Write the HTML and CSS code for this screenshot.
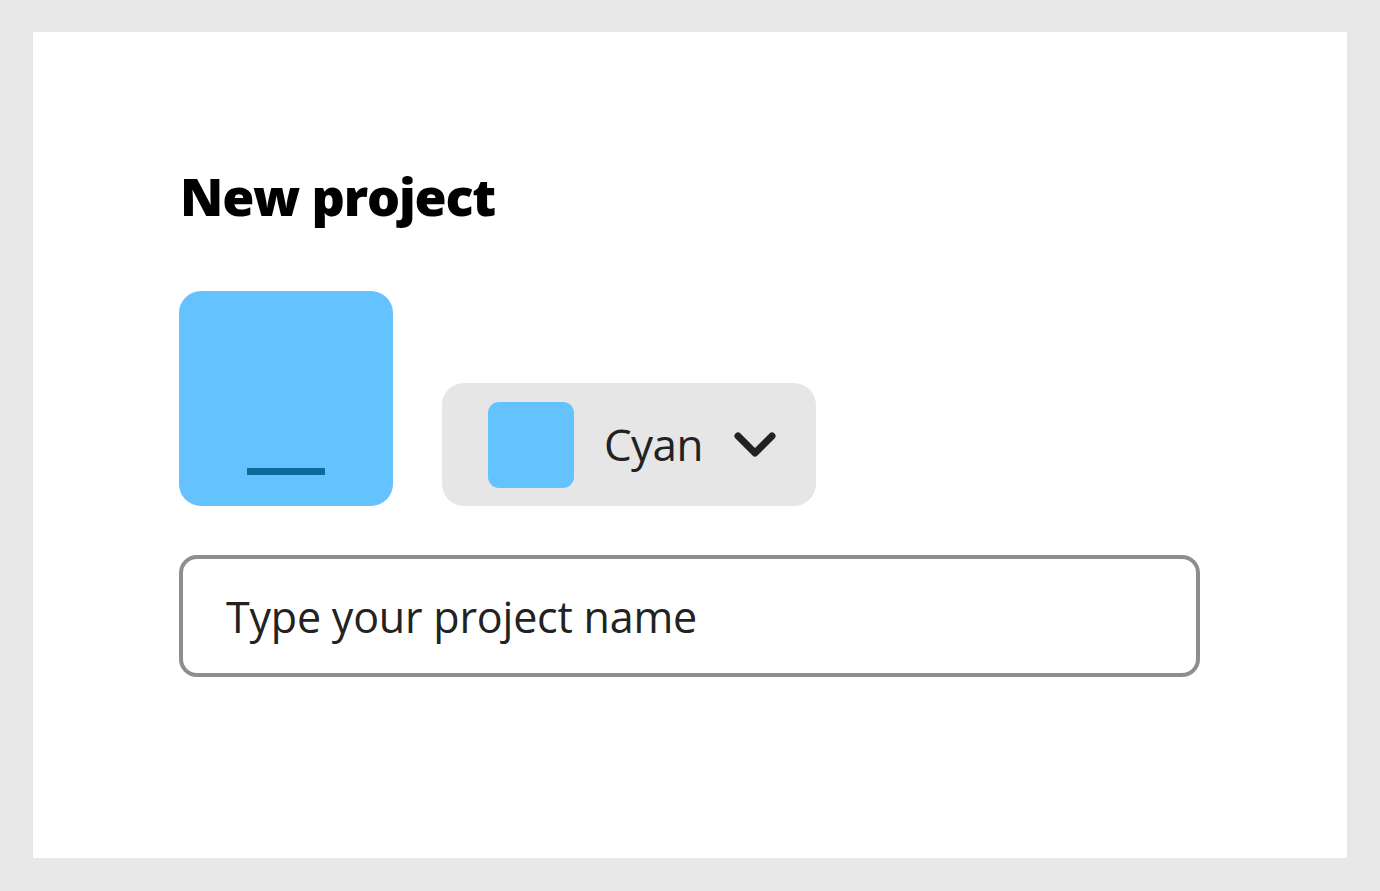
FILE: index.html
```html
<!DOCTYPE html>
<html lang="en">
<head>
<meta charset="utf-8">
<title>New project</title>
<link rel="stylesheet" href="styles.css">
</head>
<body>
<main class="card">
  <h1 class="title">New project</h1>
  <div class="row">
    <div class="tile"><span class="tile-dash"></span></div>
    <button class="picker" type="button">
      <span class="swatch"></span>
      <span class="picker-label">Cyan</span>
      <svg class="chevron" width="44" height="28" viewBox="0 0 44 28" aria-hidden="true">
        <path d="M5 5 L22 22 L39 5" fill="none" stroke="#222" stroke-width="7" stroke-linecap="round" stroke-linejoin="round"/>
      </svg>
    </button>
  </div>
  <div class="field">
    <span class="placeholder">Type your project name</span>
  </div>
</main>
</body>
</html>
```
FILE: styles.css
```css
html, body {
  margin: 0;
  padding: 0;
}
body {
  background: #e8e8e8;
  width: 1380px;
  height: 891px;
  padding: 32px 33px;
  box-sizing: border-box;
  font-family: "Open Sans", "Noto Sans", sans-serif;
}
.card {
  background: #ffffff;
  width: 1314px;
  height: 826px;
  box-sizing: border-box;
  padding: 0 0 0 146px;
  display: flex;
  flex-direction: column;
  align-items: flex-start;
}
.title {
  margin: 128px 0 0 1px;
  font-family: "Open Sans", sans-serif;
  font-weight: 800;
  font-size: 52px;
  line-height: 72px;
  color: #000;
  letter-spacing: -1.2px;
}
.row {
  margin-top: 59px;
  display: flex;
  align-items: flex-end;
  gap: 49px;
}
.tile {
  width: 214px;
  height: 215px;
  border-radius: 22px;
  background: #64c3ff;
  display: flex;
  justify-content: center;
  align-items: flex-end;
  padding-bottom: 31px;
  box-sizing: border-box;
}
.tile-dash {
  width: 78px;
  height: 7px;
  background: #0e6a9a;
}
.picker {
  width: 374px;
  height: 123px;
  border: none;
  border-radius: 22px;
  background: #e6e6e6;
  display: flex;
  align-items: center;
  padding: 0 0 0 46px;
  box-sizing: border-box;
  font: inherit;
  cursor: pointer;
}
.swatch {
  width: 86px;
  height: 86px;
  border-radius: 11px;
  background: #64c3ff;
  flex: none;
}
.picker-label {
  margin-left: 30px;
  font-size: 44px;
  letter-spacing: -0.6px;
  color: #222;
  line-height: 1;
  margin-bottom: 2px;
}
.chevron {
  margin-left: 30px;
}
.field {
  margin-top: 49px;
  width: 1021px;
  height: 122px;
  box-sizing: border-box;
  border: 4px solid #8e8e8e;
  border-radius: 18px;
  display: flex;
  align-items: center;
  padding-left: 43px;
}
.placeholder {
  font-size: 43px;
  letter-spacing: -0.2px;
  color: #222;
  line-height: 1;
}
```
